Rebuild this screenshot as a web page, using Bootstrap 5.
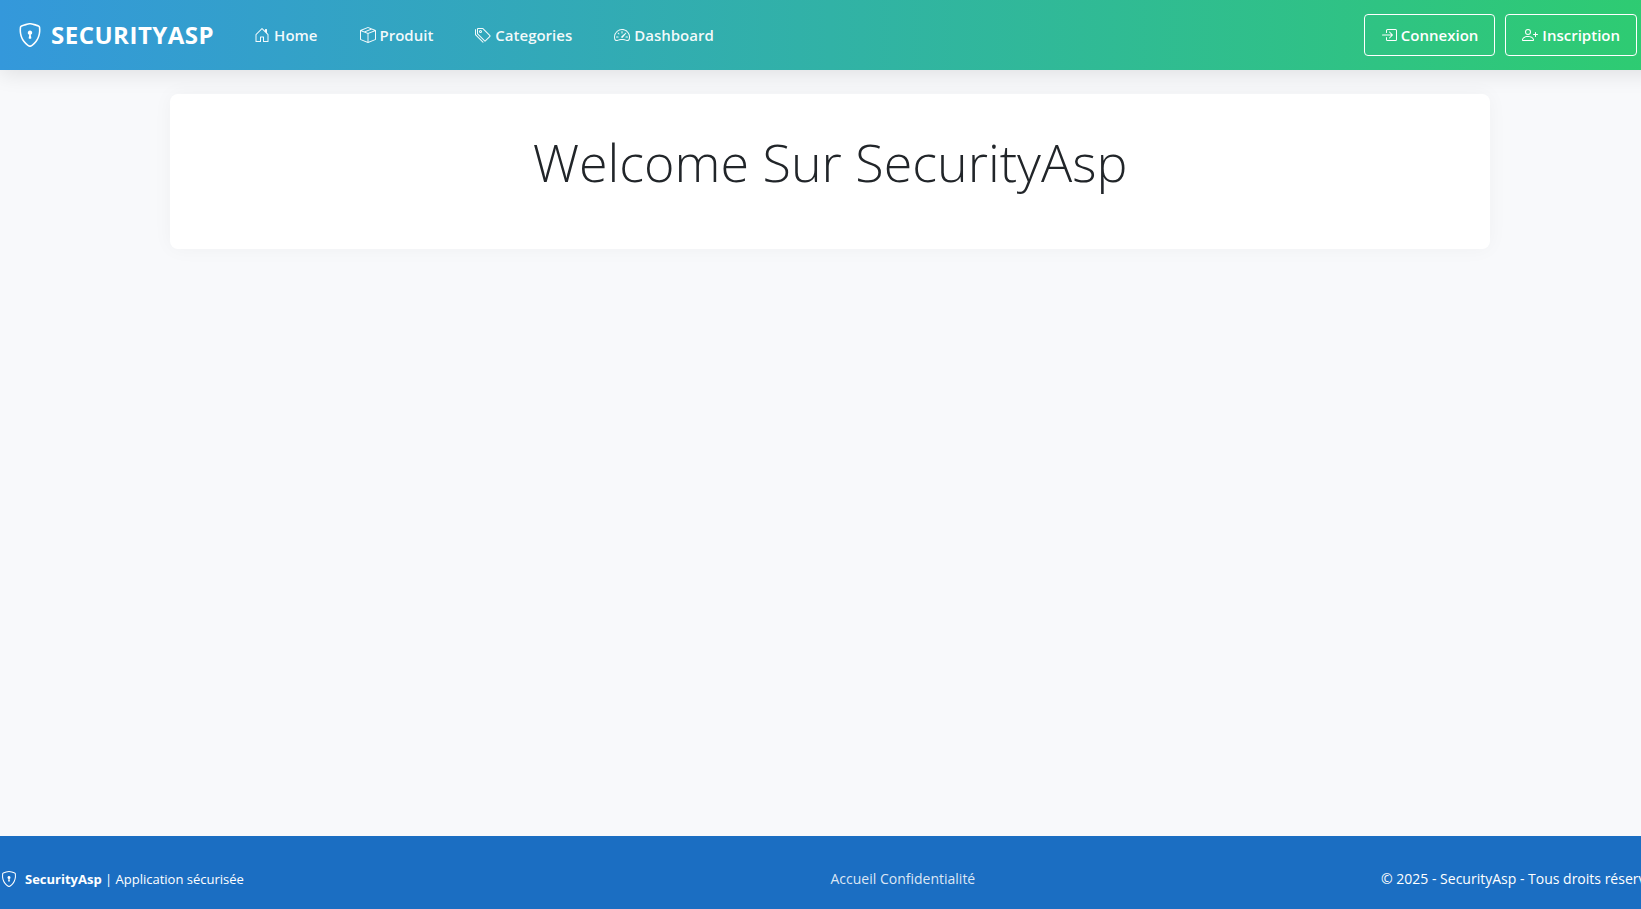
<!DOCTYPE html>
<html lang="fr">
<head>
<meta charset="utf-8">
<meta name="viewport" content="width=device-width, initial-scale=1">
<title>SecurityAsp</title>
<link href="https://cdn.jsdelivr.net/npm/bootstrap@5.3.0/dist/css/bootstrap.min.css" rel="stylesheet">
<style>
  html { overflow: hidden; }
  body { font-family: "Open Sans", "Noto Sans", sans-serif; background: #f8f9fb; overflow: hidden; }
  .page-shell { width: calc(100% + 19px); min-height: calc(100vh + 12px); }
  .site-nav { --bs-navbar-nav-link-padding-x: 16px; background: linear-gradient(90deg, #3498db, #2ecc71); box-shadow: 0 4px 20px rgba(0,0,0,.1); min-height: 70px; padding: 0 23px 1px 17px; }
  .glyph { width: 16px; height: 16px; fill: currentColor; flex: none; }
  .brand-glyph { width: 26px; height: 24px; }
  .site-nav .navbar-brand { font-size: 24px; font-weight: 700; letter-spacing: .5px; line-height: 36px; margin-right: 19px; }
  .site-nav .nav-link { font-size: 15px; font-weight: 600; line-height: 24px; color: rgba(255,255,255,.95); margin: 0 5px; }
  .btn-row { gap: 10px; }
  .btn-nav { font-size: 15px; font-weight: 600; line-height: 24px; padding: 8px 16px; border-radius: 4px; }
  .hero { border-radius: 8px; box-shadow: 0 0 20px rgba(0,0,0,.04); padding: 36px 32px; min-height: 155px; }
  .hero h1 { font-size: 52px; font-weight: 300; line-height: 64px; color: #212529; }
  .site-footer { background: #1b6ec2; font-size: 14px; line-height: 22px; padding: 32px 0 31px 1px; }
  .site-footer a { color: rgba(255,255,255,.85); }
  .footer-brand { font-size: 13px; }
</style>
</head>
<body>
<div class="page-shell d-flex flex-column">
  <header>
    <nav class="navbar navbar-expand navbar-dark site-nav">
      <a class="navbar-brand d-flex align-items-center gap-2 text-white text-uppercase" href="#">
        <svg class="glyph brand-glyph" viewBox="0 0 16 16" aria-hidden="true"><use href="#shield-lock"/></svg>SecurityAsp</a>
      <ul class="navbar-nav me-auto">
        <li class="nav-item"><a class="nav-link d-flex align-items-center gap-1" href="#"><svg class="glyph" viewBox="0 0 16 16" aria-hidden="true"><path d="M8.354 1.146a.5.5 0 0 0-.708 0l-6 6A.5.5 0 0 0 1.5 7.5v7a.5.5 0 0 0 .5.5h4.5a.5.5 0 0 0 .5-.5v-4h2v4a.5.5 0 0 0 .5.5H14a.5.5 0 0 0 .5-.5v-7a.5.5 0 0 0-.146-.354L13 5.793V2.5a.5.5 0 0 0-.5-.5h-1a.5.5 0 0 0-.5.5v1.293L8.354 1.146zM2.5 14V7.707l5.5-5.5 5.5 5.5V14H10v-4a.5.5 0 0 0-.5-.5h-3a.5.5 0 0 0-.5.5v4H2.5z"/></svg>Home</a></li>
        <li class="nav-item"><a class="nav-link d-flex align-items-center gap-1" href="#"><svg class="glyph" viewBox="0 0 16 16" aria-hidden="true"><path d="M8.186 1.113a.5.5 0 0 0-.372 0L1.846 3.5l2.404.961L10.404 2l-2.218-.887zm3.564 1.426L5.596 5 8 5.961 14.154 3.5l-2.404-.961zm3.25 1.7-6.5 2.6v7.922l6.5-2.6V4.24zM7.5 14.762V6.838L1 4.239v7.923l6.5 2.6zM7.443.184a1.5 1.5 0 0 1 1.114 0l7.129 2.852A.5.5 0 0 1 16 3.5v8.662a1 1 0 0 1-.629.928l-7.185 2.874a.5.5 0 0 1-.372 0L.63 13.09a1 1 0 0 1-.63-.928V3.5a.5.5 0 0 1 .314-.464L7.443.184z"/></svg>Produit</a></li>
        <li class="nav-item"><a class="nav-link d-flex align-items-center gap-1" href="#"><svg class="glyph" viewBox="0 0 16 16" aria-hidden="true"><path d="M3 2v4.586l7 7L14.586 9l-7-7H3zM2 2a1 1 0 0 1 1-1h4.586a1 1 0 0 1 .707.293l7 7a1 1 0 0 1 0 1.414l-4.586 4.586a1 1 0 0 1-1.414 0l-7-7A1 1 0 0 1 2 6.586V2z"/><path d="M5.5 5a.5.5 0 1 1 0-1 .5.5 0 0 1 0 1zm0 1a1.5 1.5 0 1 0 0-3 1.5 1.5 0 0 0 0 3zM1 7.086a1 1 0 0 0 .293.707L8.75 15.25l-.043.043a1 1 0 0 1-1.414 0l-7-7A1 1 0 0 1 0 7.586V3a1 1 0 0 1 1-1v5.086z"/></svg>Categories</a></li>
        <li class="nav-item"><a class="nav-link d-flex align-items-center gap-1" href="#"><svg class="glyph" viewBox="0 0 16 16" aria-hidden="true"><path d="M8 4a.5.5 0 0 1 .5.5V6a.5.5 0 0 1-1 0V4.5A.5.5 0 0 1 8 4zM3.732 5.732a.5.5 0 0 1 .707 0l.915.914a.5.5 0 1 1-.708.708l-.914-.915a.5.5 0 0 1 0-.707zM2 10a.5.5 0 0 1 .5-.5h1.586a.5.5 0 0 1 0 1H2.5A.5.5 0 0 1 2 10zm9.5 0a.5.5 0 0 1 .5-.5h1.5a.5.5 0 0 1 0 1H12a.5.5 0 0 1-.5-.5zm.754-4.246a.389.389 0 0 0-.527-.02L7.547 9.31a.91.91 0 1 0 1.302 1.258l3.434-4.297a.389.389 0 0 0-.029-.518z"/><path fill-rule="evenodd" d="M0 10a8 8 0 1 1 15.547 2.661c-.442 1.253-1.845 1.602-2.932 1.25C11.309 13.488 9.475 13 8 13c-1.474 0-3.31.488-4.615.911-1.087.352-2.49.003-2.932-1.25A7.988 7.988 0 0 1 0 10zm8-7a7 7 0 0 0-6.603 9.329c.203.575.923.876 1.68.63C4.397 12.533 6.358 12 8 12s3.604.532 4.923.96c.757.245 1.477-.056 1.68-.631A7 7 0 0 0 8 3z"/></svg>Dashboard</a></li>
      </ul>
      <div class="d-flex align-items-center btn-row">
        <button type="button" class="btn btn-outline-light btn-nav text-white border-white d-flex align-items-center gap-1"><svg class="glyph" viewBox="0 0 16 16" aria-hidden="true"><path fill-rule="evenodd" d="M6 3.5a.5.5 0 0 1 .5-.5h8a.5.5 0 0 1 .5.5v9a.5.5 0 0 1-.5.5h-8a.5.5 0 0 1-.5-.5v-2a.5.5 0 0 0-1 0v2A1.5 1.5 0 0 0 6.5 14h8a1.5 1.5 0 0 0 1.5-1.5v-9A1.5 1.5 0 0 0 14.5 2h-8A1.5 1.5 0 0 0 5 3.5v2a.5.5 0 0 0 1 0v-2z"/><path fill-rule="evenodd" d="M11.854 8.354a.5.5 0 0 0 0-.708l-3-3a.5.5 0 1 0-.708.708L10.293 7.5H1.5a.5.5 0 0 0 0 1h8.793l-2.147 2.146a.5.5 0 0 0 .708.708l3-3z"/></svg>Connexion</button>
        <button type="button" class="btn btn-outline-light btn-nav text-white border-white d-flex align-items-center gap-1"><svg class="glyph" viewBox="0 0 16 16" aria-hidden="true"><path d="M6 8a3 3 0 1 0 0-6 3 3 0 0 0 0 6zm2-3a2 2 0 1 1-4 0 2 2 0 0 1 4 0zm4 8c0 1-1 1-1 1H1s-1 0-1-1 1-4 6-4 6 3 6 4zm-1-.004c-.001-.246-.154-.986-.832-1.664C9.516 10.68 8.289 10 6 10c-2.29 0-3.516.68-4.168 1.332-.678.678-.83 1.418-.832 1.664h10z"/><path fill-rule="evenodd" d="M13.5 5a.5.5 0 0 1 .5.5V7h1.5a.5.5 0 0 1 0 1H14v1.5a.5.5 0 0 1-1 0V8h-1.5a.5.5 0 0 1 0-1H13V5.5a.5.5 0 0 1 .5-.5z"/></svg>Inscription</button>
      </div>
    </nav>
  </header>

  <main class="container px-0 mt-4 flex-grow-1">
    <section class="hero bg-white text-center">
      <h1 class="mb-0">Welcome Sur SecurityAsp</h1>
    </section>
  </main>

  <footer class="site-footer text-white">
    <div class="d-flex align-items-center text-nowrap">
      <div class="d-flex align-items-center gap-2 w-50 footer-brand">
        <svg class="glyph" viewBox="0 0 16 16" aria-hidden="true"><g id="shield-lock"><path d="M5.338 1.59a61.44 61.44 0 0 0-2.837.856.481.481 0 0 0-.328.39c-.554 4.157.726 7.19 2.253 9.188a10.725 10.725 0 0 0 2.287 2.233c.346.244.652.42.893.533.12.057.218.095.293.118a.55.55 0 0 0 .101.025.615.615 0 0 0 .1-.025c.076-.023.174-.061.294-.118.24-.113.547-.29.893-.533a10.726 10.726 0 0 0 2.287-2.233c1.527-1.997 2.807-5.031 2.253-9.188a.48.48 0 0 0-.328-.39c-.651-.213-1.75-.56-2.837-.855C9.552 1.29 8.531 1.067 8 1.067c-.53 0-1.552.223-2.662.524zM5.072.56C6.157.265 7.31 0 8 0s1.843.265 2.928.56c1.11.3 2.229.655 2.887.87a1.54 1.54 0 0 1 1.044 1.262c.596 4.477-.787 7.795-2.465 9.99a11.775 11.775 0 0 1-2.517 2.453 7.159 7.159 0 0 1-1.048.625c-.28.132-.581.24-.829.24s-.548-.108-.829-.24a7.158 7.158 0 0 1-1.048-.625 11.777 11.777 0 0 1-2.517-2.453C1.928 10.487.545 7.169 1.141 2.692A1.54 1.54 0 0 1 2.185 1.43 62.456 62.456 0 0 1 5.072.56z"/><path d="M9.5 6.5a1.5 1.5 0 0 1-1 1.415l.385 1.99a.5.5 0 0 1-.491.595h-.788a.5.5 0 0 1-.49-.595l.384-1.99a1.5 1.5 0 1 1 2-1.415z"/></g></svg>
        <span><strong>SecurityAsp</strong> | Application sécurisée</span>
      </div>
      <div class="d-flex justify-content-between w-50">
        <div><a class="text-decoration-none" href="#">Accueil</a> <a class="text-decoration-none" href="#">Confidentialité</a></div>
        <div>© 2025 - SecurityAsp - Tous droits réservés</div>
      </div>
    </div>
  </footer>
</div>
<script src="https://cdn.jsdelivr.net/npm/bootstrap@5.3.0/dist/js/bootstrap.bundle.min.js"></script>
</body>
</html>
